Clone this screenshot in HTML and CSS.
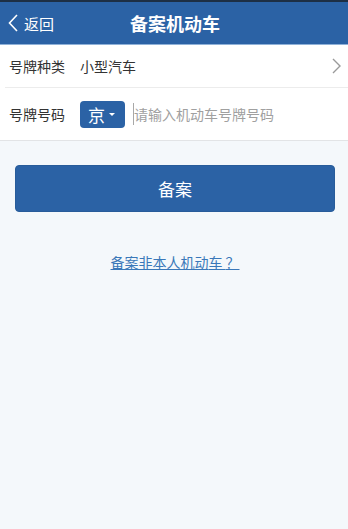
FILE: index.html
```html
<!DOCTYPE html>
<html lang="zh">
<head>
<meta charset="utf-8">
<link rel="stylesheet" href="styles.css">
</head>
<body>
<div class="page">
  <header class="topbar">
    <div class="back">
      <svg class="back-icon" width="12" height="20" viewBox="0 0 12 20"><path d="M10 2 L2.5 10 L10 18" fill="none" stroke="#fff" stroke-width="1.6"/></svg>
      <span>返回</span>
    </div>
    <div class="title">备案机动车</div>
  </header>
  <section class="form">
    <div class="row row-first">
      <span class="label">号牌种类</span>
      <span class="value">小型汽车</span>
      <svg class="chev" width="9" height="16" viewBox="0 0 9 16"><path d="M1 1 L8 8 L1 15" fill="none" stroke="#9a9a9a" stroke-width="1.4"/></svg>
    </div>
    <div class="row row-second">
      <span class="label">号牌号码</span>
      <span class="prov">京<span class="caret"></span></span>
      <span class="cursor"></span>
      <span class="placeholder">请输入机动车号牌号码</span>
    </div>
  </section>
  <div class="actions">
    <button class="submit">备案</button>
    <a class="link" href="#">备案非本人机动<span class="gap">车</span>？</a>
  </div>
</div>
</body>
</html>
```
FILE: styles.css
```css
* { box-sizing: border-box; }
html, body { margin: 0; padding: 0; }
body {
  width: 348px;
  height: 529px;
  background: #f4f8fb;
  font-family: "Noto Sans CJK SC", "Noto Sans", sans-serif;
  overflow: hidden;
}
.page { display: flex; flex-direction: column; }
.topbar {
  height: 45px;
  background: #2b62a5;
  border-top: 2px solid #1d2f45;
  border-bottom: 1px solid #8fb1d8;
  position: relative;
  display: flex;
  align-items: center;
  color: #fff;
}
.back {
  display: flex;
  align-items: center;
  padding-left: 7px;
  gap: 5px;
  font-size: 15px;
}
.title {
  position: absolute;
  left: 0; right: 0;
  text-align: center;
  font-size: 18px;
  font-weight: bold;
  pointer-events: none;
  padding-left: 2px;
}
.form { background: #fff; border-bottom: 1px solid #e2e4e6; }
.row {
  display: flex;
  align-items: center;
  font-size: 14px;
  color: #333;
}
.row-first {
  height: 43px;
  margin-left: 5px;
  padding-left: 4px;
  border-bottom: 1px solid #ececec;
}
.row-second {
  height: 52px;
  padding-left: 9px;
}
.label { width: 71px; }
.value { flex: 1; }
.chev { margin-right: 7px; }
.prov {
  width: 45px;
  height: 27px;
  background: #2b62a5;
  border-radius: 4px;
  color: #fff;
  font-size: 17px;
  display: flex;
  align-items: center;
  justify-content: center;
  gap: 4px;
  padding-right: 2px;
}
.caret {
  width: 0; height: 0;
  border-left: 3px solid transparent;
  border-right: 3px solid transparent;
  border-top: 3px solid #fff;
}
.cursor {
  width: 1px;
  height: 22px;
  background: #a8a8a8;
  margin-left: 8px;
}
.placeholder { color: #a0a0a0; margin-left: 0; }
.actions {
  display: flex;
  flex-direction: column;
  align-items: center;
  padding: 24px 13px 0 15px;
}
.submit {
  width: 320px;
  height: 47px;
  background: #2b62a5;
  border: 1px solid #285c9a;
  border-radius: 4px;
  color: #fff;
  font-size: 17px;
  font-family: inherit;
}
.link {
  margin-top: 40px;
  color: #3a78b9;
  font-size: 14px;
  text-decoration: underline;
}
.gap { letter-spacing: 3px; }
```
